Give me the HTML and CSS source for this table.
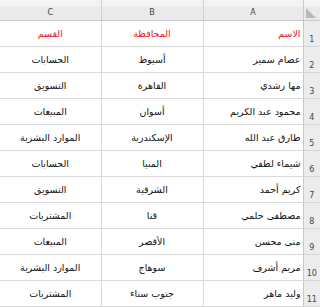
FILE: index.html
```html
<!DOCTYPE html>
<html lang="ar" dir="rtl">
<head>
<meta charset="utf-8">
<link rel="stylesheet" href="styles.css">
</head>
<body>
<table class="sheet">
  <colgroup>
    <col class="c-num">
    <col class="c-a">
    <col class="c-b">
    <col class="c-c">
  </colgroup>
  <thead>
    <tr>
      <th class="corner"><svg class="tri" width="10" height="10" viewBox="0 0 10 10"><polygon points="0,0 0,10 10,10" fill="#b9b9b9"/></svg></th>
      <th class="colh">A</th>
      <th class="colh">B</th>
      <th class="colh">C</th>
    </tr>
  </thead>
  <tbody>
    <tr class="title"><td class="rn">1</td><td class="ca">الاسم</td><td>المحافظة</td><td>القسم</td></tr>
    <tr><td class="rn">2</td><td class="ca">عصام سمير</td><td>أسيوط</td><td>الحسابات</td></tr>
    <tr><td class="rn">3</td><td class="ca">مها رشدي</td><td>القاهرة</td><td>التسويق</td></tr>
    <tr><td class="rn">4</td><td class="ca">محمود عبد الكريم</td><td>أسوان</td><td>المبيعات</td></tr>
    <tr><td class="rn">5</td><td class="ca">طارق عبد الله</td><td>الإسكندرية</td><td>الموارد البشرية</td></tr>
    <tr><td class="rn">6</td><td class="ca">شيماء لطفي</td><td>المنيا</td><td>الحسابات</td></tr>
    <tr><td class="rn">7</td><td class="ca">كريم أحمد</td><td>الشرقية</td><td>التسويق</td></tr>
    <tr><td class="rn">8</td><td class="ca">مصطفى حلمي</td><td>قنا</td><td>المشتريات</td></tr>
    <tr><td class="rn">9</td><td class="ca">منى محسن</td><td>الأقصر</td><td>المبيعات</td></tr>
    <tr><td class="rn">10</td><td class="ca">مريم أشرف</td><td>سوهاج</td><td>الموارد البشرية</td></tr>
    <tr><td class="rn">11</td><td class="ca">وليد ماهر</td><td>جنوب سناء</td><td>المشتريات</td></tr>
  </tbody>
</table>
</body>
</html>
```
FILE: styles.css
```css
html, body {
  margin: 0;
  padding: 0;
  background: #ffffff;
}
.sheet {
  border-collapse: collapse;
  table-layout: fixed;
  width: 320px;
  font-family: "DejaVu Sans", "Liberation Sans", sans-serif;
}
.c-num { width: 17px; }
.c-a { width: 100px; }
.c-b { width: 102px; }
.c-c { width: 101px; }

thead tr { height: 20px; }
thead th {
  padding: 5px 0 0 0;
  line-height: 10px;
  background: linear-gradient(#f3f3f3 0, #f3f3f3 5px, #eaeaea 5px);
  border-top: 1px solid #f8f8f8;
  border-bottom: 1px solid #c9c9c9;
  border-left: 1px solid #d0d0d0;
  font-weight: normal;
  font-size: 8px;
  color: #444444;
  text-align: center;
  vertical-align: middle;
}
thead th.colh:last-child { border-left: none; }
.corner {
  position: relative;
  border-left: 1px solid #c9c9c9;
}
.tri {
  position: absolute;
  left: 2px;
  top: 7px;
}

tbody tr { height: 26px; }
tbody td {
  padding: 0 2px;
  line-height: 12px;
  border-bottom: 1px solid #d9d9d9;
  border-left: 1px solid #d9d9d9;
  font-size: 9.5px;
  color: #111111;
  text-align: center;
  vertical-align: middle;
  white-space: nowrap;
  overflow: hidden;
}
tbody td:last-child { border-left: none; }
tbody td.ca {
  text-align: right;
  padding-right: 2px;
}
tbody td.rn {
  background: #ececec;
  border-left: 1px solid #c9c9c9;
  border-bottom: 1px solid #d6d6d6;
  font-size: 8px;
  line-height: 10px;
  color: #444444;
  text-align: center;
  vertical-align: bottom;
  padding: 0 0 1px 0;
}
.title td:not(.rn) {
  color: #e8202a;
}
```
